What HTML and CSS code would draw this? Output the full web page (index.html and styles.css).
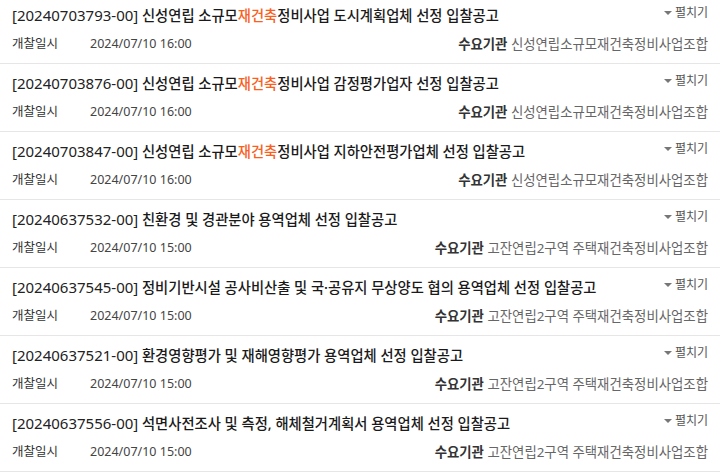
FILE: index.html
```html
<!DOCTYPE html>
<html lang="ko">
<head>
<meta charset="utf-8">
<link rel="stylesheet" href="styles.css">
</head>
<body>
<ul class="list">
  <li class="item">
    <div class="head">
      <p class="title"><span class="no">[20240703793-00]</span> 신성연립 소규모<span class="hl">재건축</span>정비사업 도시계획업체 선정 입찰공고</p>
      <span class="toggle"><span class="arrow"></span>펼치기</span>
    </div>
    <div class="meta">
      <span class="label">개찰일시</span><span class="date">2024/07/10 16:00</span>
      <span class="org"><b>수요기관</b> 신성연립소규모재건축정비사업조합</span>
    </div>
  </li>
  <li class="item">
    <div class="head">
      <p class="title"><span class="no">[20240703876-00]</span> 신성연립 소규모<span class="hl">재건축</span>정비사업 감정평가업자 선정 입찰공고</p>
      <span class="toggle"><span class="arrow"></span>펼치기</span>
    </div>
    <div class="meta">
      <span class="label">개찰일시</span><span class="date">2024/07/10 16:00</span>
      <span class="org"><b>수요기관</b> 신성연립소규모재건축정비사업조합</span>
    </div>
  </li>
  <li class="item">
    <div class="head">
      <p class="title"><span class="no">[20240703847-00]</span> 신성연립 소규모<span class="hl">재건축</span>정비사업 지하안전평가업체 선정 입찰공고</p>
      <span class="toggle"><span class="arrow"></span>펼치기</span>
    </div>
    <div class="meta">
      <span class="label">개찰일시</span><span class="date">2024/07/10 16:00</span>
      <span class="org"><b>수요기관</b> 신성연립소규모재건축정비사업조합</span>
    </div>
  </li>
  <li class="item">
    <div class="head">
      <p class="title"><span class="no">[20240637532-00]</span> 친환경 및 경관분야 용역업체 선정 입찰공고</p>
      <span class="toggle"><span class="arrow"></span>펼치기</span>
    </div>
    <div class="meta">
      <span class="label">개찰일시</span><span class="date">2024/07/10 15:00</span>
      <span class="org"><b>수요기관</b> 고잔연립2구역 주택재건축정비사업조합</span>
    </div>
  </li>
  <li class="item">
    <div class="head">
      <p class="title"><span class="no">[20240637545-00]</span> 정비기반시설 공사비산출 및 국·공유지 무상양도 협의 용역업체 선정 입찰공고</p>
      <span class="toggle"><span class="arrow"></span>펼치기</span>
    </div>
    <div class="meta">
      <span class="label">개찰일시</span><span class="date">2024/07/10 15:00</span>
      <span class="org"><b>수요기관</b> 고잔연립2구역 주택재건축정비사업조합</span>
    </div>
  </li>
  <li class="item">
    <div class="head">
      <p class="title"><span class="no">[20240637521-00]</span> 환경영향평가 및 재해영향평가 용역업체 선정 입찰공고</p>
      <span class="toggle"><span class="arrow"></span>펼치기</span>
    </div>
    <div class="meta">
      <span class="label">개찰일시</span><span class="date">2024/07/10 15:00</span>
      <span class="org"><b>수요기관</b> 고잔연립2구역 주택재건축정비사업조합</span>
    </div>
  </li>
  <li class="item">
    <div class="head">
      <p class="title"><span class="no">[20240637556-00]</span> 석면사전조사 및 측정, 해체철거계획서 용역업체 선정 입찰공고</p>
      <span class="toggle"><span class="arrow"></span>펼치기</span>
    </div>
    <div class="meta">
      <span class="label">개찰일시</span><span class="date">2024/07/10 15:00</span>
      <span class="org"><b>수요기관</b> 고잔연립2구역 주택재건축정비사업조합</span>
    </div>
  </li>
</ul>
</body>
</html>
```
FILE: styles.css
```css
html, body {
  margin: 0;
  padding: 0;
  background: #fff;
}
body {
  font-family: "Noto Sans", "Noto Sans CJK KR", sans-serif;
  color: #222;
  overflow: hidden;
}
.list {
  list-style: none;
  margin: -4px 0 0 0;
  padding: 0;
}
.item {
  padding: 9px 12px 0 12px;
  height: 58px;
  border-bottom: 1px solid #e6e6e6;
}
.head {
  display: flex;
  align-items: flex-start;
}
.title {
  flex: 1;
  margin: 0;
  font-size: 14.3px;
  line-height: 20px;
  font-weight: 500;
  color: #1a1a1a;
  white-space: nowrap;
}
.no {
  font-size: 15px;
  font-weight: 400;
  color: #222;
}
.hl {
  color: #fa5f1e;
}
.toggle {
  font-size: 12px;
  line-height: 14px;
  color: #555;
  display: flex;
  align-items: center;
  gap: 3px;
  margin-top: 1px;
}
.arrow {
  width: 0;
  height: 0;
  border-left: 4px solid transparent;
  border-right: 4px solid transparent;
  border-top: 4px solid #777;
}
.meta {
  display: flex;
  align-items: center;
  margin-top: 8px;
  line-height: 20px;
}
.label {
  width: 78px;
  font-size: 12.5px;
  color: #333;
}
.date {
  font-size: 12.5px;
  color: #444;
}
.org {
  margin-left: auto;
  font-size: 13.4px;
  color: #666;
}
.org b {
  color: #333;
  font-weight: 700;
}
```
